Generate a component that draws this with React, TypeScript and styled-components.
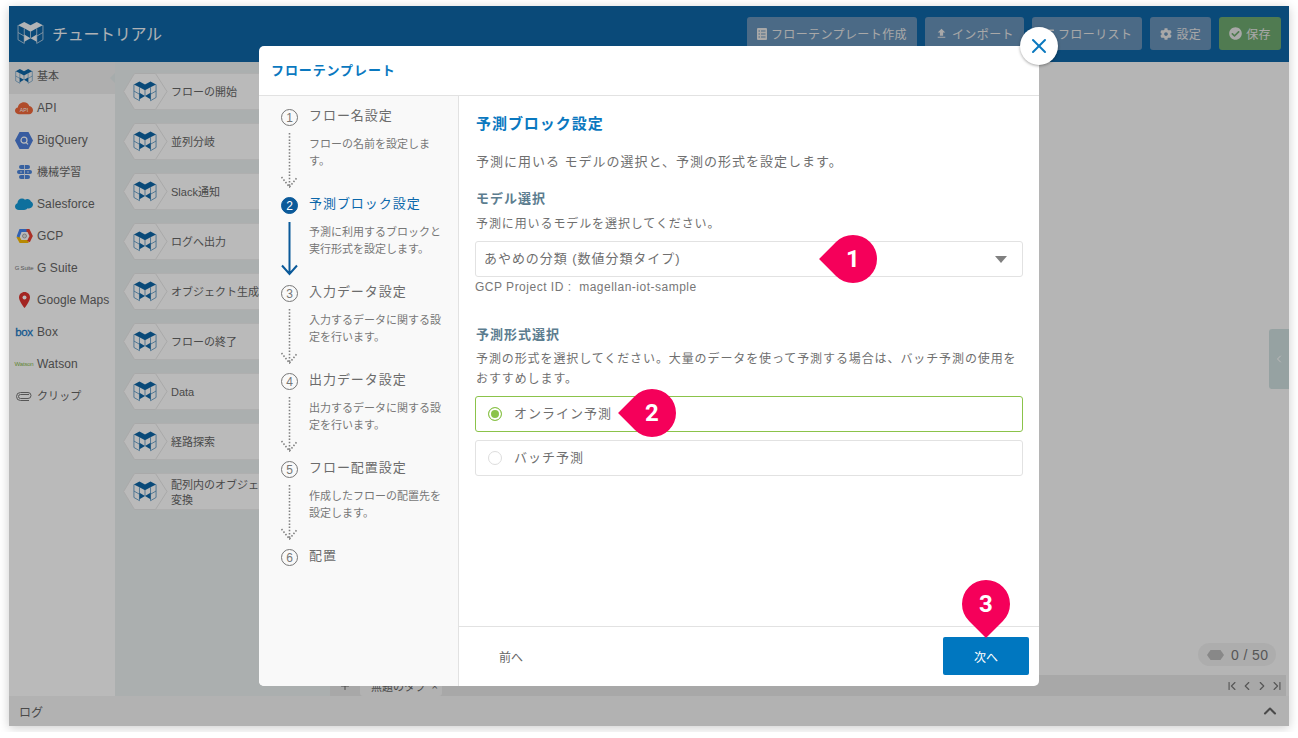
import styled, { createGlobalStyle } from 'styled-components'
import { FaCheckCircle, FaCog, FaList } from 'react-icons/fa'
import { MdFileUpload } from 'react-icons/md'
import { ChevronFirst, ChevronLast, ChevronLeft, ChevronRight, ChevronUp, Plus, X } from 'lucide-react'

const GlobalStyle = createGlobalStyle`
  html, body {
    margin: 0;
    background: #fff;
    font-family: "Liberation Sans", "Noto Sans CJK JP", sans-serif;
    color: #666;
  }
  * { box-sizing: border-box; }
`

const Frame = styled.div`
  position: relative;
  width: 1280px;
  height: 720px;
  margin: 6px 9px;
  display: flex;
  flex-direction: column;
  background: #fff;
  box-shadow: 0 2px 10px rgba(0, 0, 0, 0.2);
`

const Header = styled.header`
  height: 56px;
  flex: none;
  display: flex;
  align-items: flex-start;
  padding: 11px 8px 0 8px;
  background: #0f66a6;
  color: #fff;
`

const Brand = styled.div`
  display: flex;
  align-items: center;
  gap: 8px;
  height: 31px;
  margin-right: auto;
  font-size: 16px;
  letter-spacing: -0.3px;
  color: #f0f4f8;
`

const HeaderButtons = styled.div`
  display: flex;
  gap: 8px;
`

const HeaderButton = styled.button<{ $green?: boolean }>`
  height: 33px;
  display: flex;
  align-items: center;
  gap: 4px;
  padding: 0 10px;
  border: 0;
  border-radius: 3px;
  font: inherit;
  font-size: 12px;
  letter-spacing: 0.4px;
  color: #e6e6e6;
  background: ${(p) => (p.$green ? '#6ea96f' : '#6892b8')};
`

const Body = styled.div`
  flex: 1;
  display: flex;
  min-height: 0;
`

const Sidebar = styled.nav`
  width: 106px;
  flex: none;
  background: #fff;
`

const SideItem = styled.div<{ $active?: boolean }>`
  position: relative;
  height: 32px;
  display: flex;
  align-items: center;
  padding: 0 0 4px 6px;
  gap: 4px;
  font-size: 12px;
  letter-spacing: 0.1px;
  background: ${(p) => (p.$active ? '#f0f0f0' : 'transparent')};

  ${(p) =>
    p.$active &&
    `&::after {
      content: '';
      position: absolute;
      right: 0;
      top: 11px;
      border: 5px solid transparent;
      border-right-color: #e4ecec;
      border-left-width: 0;
    }`}
`

const SideLabel = styled.span<{ $jp: boolean }>`
  font-size: ${(p) => (p.$jp ? 11 : 12)}px;
  padding-bottom: ${(p) => (p.$jp ? 2 : 0)}px;
`

const SideIconBox = styled.span`
  width: 18px;
  height: 18px;
  flex: none;
  display: flex;
  align-items: center;
  justify-content: center;
`

const TinyLogo = styled.span<{ $color: string }>`
  font-size: 6px;
  letter-spacing: -0.2px;
  white-space: nowrap;
  color: ${(p) => p.$color};
`

const BoxLogo = styled.span`
  font-size: 11.5px;
  line-height: 16px;
  letter-spacing: -0.3px;
  -webkit-text-stroke: 0.3px #1a78c4;
  color: #1a78c4;
`

const Blocks = styled.div`
  width: 215px;
  flex: none;
  display: flex;
  flex-direction: column;
  gap: 13px;
  padding: 11px 10px 0 8px;
  background: #ebf0f0;
`

const BlockItem = styled.div`
  display: flex;
  height: 37px;
  isolation: isolate;
`

const BlockHex = styled.svg`
  width: 45px;
  height: 37px;
  flex: none;
  position: relative;
  z-index: 1;
`

const BlockBody = styled.div`
  flex: 1;
  margin-left: -12px;
  padding: 2px 34px 0 15px;
  display: flex;
  align-items: center;
  font-size: 11px;
  line-height: 15px;
  background: #fff;
  border: 1px solid #f0f0f0;
  border-left: 0;
`

const Workspace = styled.main`
  flex: 1;
  display: flex;
  flex-direction: column;
  background: #f8f8f8;
`

const Canvas = styled.div`
  position: relative;
  flex: 1;
`

const Counter = styled.div`
  position: absolute;
  right: 13px;
  bottom: 9px;
  height: 23px;
  width: 78px;
  display: flex;
  align-items: center;
  gap: 7px;
  padding-left: 9px;
  border-radius: 12px;
  font-size: 14px;
  letter-spacing: 0.4px;
  background: #eeeeee;
  color: #777;
`

const Handle = styled.div`
  position: absolute;
  right: 0;
  top: 267px;
  width: 20px;
  height: 60px;
  display: flex;
  align-items: center;
  justify-content: center;
  border-radius: 3px 0 0 3px;
  background: #cedfdf;
  color: #fff;
`

const TabBar = styled.div`
  height: 21px;
  margin-right: 3px;
  display: flex;
  align-items: center;
  padding-left: 9px;
  background: #e6e6e6;
`

const Tab = styled.div`
  height: 21px;
  width: 82px;
  margin-left: 9px;
  display: flex;
  align-items: center;
  justify-content: space-between;
  padding: 0 4px 0 11px;
  font-size: 11px;
  background: #f4f4f4;
  border-radius: 0 0 3px 3px;
`

const Pager = styled.div`
  margin-left: auto;
  padding-right: 2px;
  display: flex;
  gap: 1px;
  color: #777;
`

const LogBar = styled.footer`
  height: 30px;
  flex: none;
  display: flex;
  align-items: center;
  justify-content: space-between;
  padding: 0 9px 0 10px;
  font-size: 12px;
  background: #f5f5f5;
`

const Overlay = styled.div`
  position: absolute;
  inset: 0;
  display: flex;
  align-items: center;
  justify-content: center;
  background: rgba(0, 0, 0, 0.27);
`

const Modal = styled.section`
  position: relative;
  width: 780px;
  height: 640px;
  display: flex;
  flex-direction: column;
  border-radius: 5px;
  background: #fff;
`

const CloseButton = styled.button`
  position: absolute;
  top: -19px;
  right: -19px;
  width: 38px;
  height: 38px;
  display: flex;
  align-items: center;
  justify-content: center;
  padding: 0;
  border: 0;
  border-radius: 50%;
  background: #fff;
  color: #0a78bf;
  box-shadow: 0 1px 3px rgba(0, 0, 0, 0.35);
`

const ModalHeader = styled.div`
  height: 50px;
  flex: none;
  display: flex;
  align-items: center;
  padding: 0 12px 2px;
  font-size: 13px;
  font-weight: 700;
  letter-spacing: 0.9px;
  color: #0a78bf;
  border-bottom: 1px solid #e2e2e2;
`

const ModalBody = styled.div`
  flex: 1;
  min-height: 0;
  display: flex;
`

const Stepper = styled.div`
  width: 200px;
  flex: none;
  padding: 13px 0 0 22px;
  background: #f9f9f9;
  border-right: 1px solid #e2e2e2;
  border-radius: 0 0 0 5px;
`

const Step = styled.div`
  height: 88px;
  display: flex;
  gap: 11px;
`

const StepRail = styled.div`
  width: 17px;
  flex: none;
  display: flex;
  flex-direction: column;
  align-items: center;
`

const StepNumber = styled.span<{ $active?: boolean }>`
  width: 17px;
  height: 17px;
  flex: none;
  display: flex;
  align-items: center;
  justify-content: center;
  border-radius: 50%;
  font-size: 12px;
  border: 1px solid ${(p) => (p.$active ? '#0b5a9a' : '#777')};
  color: ${(p) => (p.$active ? '#fff' : '#777')};
  background: ${(p) => (p.$active ? '#0b5a9a' : 'transparent')};
`

const StepLine = styled.svg`
  width: 17px;
  height: 55px;
  margin-top: 7px;
  flex: none;
`

const StepText = styled.div`
  width: 136px;
  margin-top: -1px;
`

const StepTitle = styled.div<{ $active?: boolean }>`
  font-size: 13px;
  line-height: 15px;
  letter-spacing: 0.95px;
  white-space: nowrap;
  color: ${(p) => (p.$active ? '#0b68ab' : '#6c6c6c')};
`

const StepDesc = styled.div`
  margin-top: 13px;
  font-size: 11px;
  line-height: 17px;
  color: #777;
`

const Pane = styled.div`
  flex: 1;
  min-width: 0;
  display: flex;
  flex-direction: column;
`

const PaneMain = styled.div`
  flex: 1;
  padding: 18px 16px 0 17px;
`

const PaneTitle = styled.h2`
  margin: 0;
  font-size: 15px;
  line-height: 20px;
  letter-spacing: 0.95px;
  color: #0a78bf;
`

const Lead = styled.p`
  margin: 18px 0 0;
  font-size: 13px;
  line-height: 20px;
  letter-spacing: 1px;
  color: #6f6f6f;
`

const FieldTitle = styled.h3<{ $gap: number }>`
  margin: ${(p) => p.$gap}px 0 0;
  font-size: 13px;
  line-height: 18px;
  letter-spacing: 1px;
  color: #5c7d8f;
`

const Help = styled.p<{ $gap: number }>`
  margin: ${(p) => p.$gap}px 0 0;
  font-size: 12px;
  line-height: 20px;
  letter-spacing: 0.9px;
  color: #6f6f6f;
`

const SelectBox = styled.div`
  position: relative;
  height: 36px;
  margin: 7px 0 0 -1px;
  display: flex;
  align-items: center;
  padding: 0 15px 3px 8px;
  border: 1px solid #e2e2e2;
  border-radius: 3px;
  font-size: 13px;
  letter-spacing: 0.95px;
  color: #6f6f6f;
`

const Caret = styled.span`
  margin: 3px 0 0 auto;
  border: 6px solid transparent;
  border-top: 7px solid #808080;
  border-bottom: 0;
`

const Note = styled.div`
  margin: 2px 0 0 -1px;
  font-size: 12px;
  line-height: 17px;
  letter-spacing: 0.5px;
  white-space: pre;
  color: #777;
`

const RadioRow = styled.div<{ $checked?: boolean }>`
  position: relative;
  height: 36px;
  margin: 7px 0 0 -1px;
  display: flex;
  align-items: center;
  gap: 12px;
  padding: 0 0 4px 12px;
  border: 1px solid ${(p) => (p.$checked ? '#8bc34a' : '#e2e2e2')};
  border-radius: 3px;
  font-size: 13px;
  letter-spacing: 1px;
  color: #6f6f6f;

  & + & {
    margin-top: 8px;
  }
`

const RadioDot = styled.span<{ $checked?: boolean }>`
  width: 14px;
  height: 14px;
  flex: none;
  margin-top: 4px;
  border-radius: 50%;
  border: 1px solid ${(p) => (p.$checked ? '#8bc34a' : '#ddd')};
  background: ${(p) => (p.$checked ? '#8bc34a' : '#fff')};
  box-shadow: ${(p) => (p.$checked ? 'inset 0 0 0 2px #fff' : 'none')};
`

const PaneFooter = styled.div`
  height: 60px;
  flex: none;
  display: flex;
  align-items: flex-start;
  justify-content: space-between;
  padding: 10px 10px 0 40px;
  border-top: 1px solid #e2e2e2;
`

const PrevButton = styled.button`
  height: 38px;
  padding: 0;
  border: 0;
  font: inherit;
  font-size: 12px;
  color: #666;
  background: none;
`

const NextButton = styled.button`
  position: relative;
  width: 86px;
  height: 38px;
  padding: 0;
  border: 0;
  border-radius: 2px;
  font: inherit;
  font-size: 12px;
  color: #fff;
  background: #0077c0;
`

const Pin = styled.span<{ $tip: 'left' | 'bottom'; $left: number; $top: number }>`
  position: absolute;
  left: ${(p) => p.$left}px;
  top: ${(p) => p.$top}px;
  width: 48px;
  height: 48px;
  display: flex;
  align-items: center;
  justify-content: center;
  font-family: Roboto, sans-serif;
  font-size: 24px;
  font-weight: 700;
  letter-spacing: 0;
  color: #fff;

  &::before {
    content: '';
    position: absolute;
    inset: 0;
    border-radius: 50% 50% 50% 0;
    background: #f5005a;
    transform: rotate(${(p) => (p.$tip === 'left' ? 45 : -45)}deg);
  }
`

const PinNumber = styled.span`
  position: relative;
`

const LogoMark = ({ size, dark, line }: { size: number; dark: string; line: string }) => (
  <svg width={size} height={size} viewBox="0 0 26 24" fill="none" stroke={line} strokeWidth="0.8">
    <path d="M1 5v14l6 3.5V8M25 5v14l-6 3.5V8M1 12l6 3.5M25 12l-6 3.5M13 11v6.5" />
    <path fill={dark} stroke="none" d="M1 5l6-3.2L13 5 7 8zM13 5l6-3.2L25 5l-6 3zM7 8l6-3 6 3-6 3.2zM7 14l6 3.5L7 21zM19 14l-6 3.5 6 3.5z" />
  </svg>
)

const TemplateIcon = () => (
  <svg width="10" height="12" viewBox="0 0 10 12">
    <rect width="10" height="12" rx="1" fill="currentColor" />
    <path d="M1.500 3h1.500M4 3h4.500M1.500 6h1.500M4 6h4.500M1.500 9h1.500M4 9h4.500" stroke="#6892b8" strokeWidth="1.200" />
  </svg>
)

const sideItems: { label: string; icon: React.ReactNode; active?: boolean; jp?: boolean }[] = [
  { label: '基本', jp: true, active: true, icon: <LogoMark size={18} dark="#0f66a6" line="#3f85b8" /> },
  {
    label: 'API',
    icon: (
      <svg width="19" height="14" viewBox="0 0 19 14">
        <path fill="#f2693b" d="M4 13.500C1.600 13.500 0 12 0 10s1.300-3.300 3-3.500C3.300 3.500 6 1 9.500 1c2.700 0 4.800 1.500 5.600 3.900 2.200.3 3.900 2.200 3.900 4.400 0 2.400-1.900 4.200-4.200 4.200z" />
        <text x="9.5" y="11" fontSize="5.5" textAnchor="middle" fill="#fff">API</text>
      </svg>
    ),
  },
  {
    label: 'BigQuery',
    icon: (
      <svg width="18" height="17" viewBox="0 0 18 17">
        <path fill="#4d7fdc" d="M4.500 0h9L18 8.500 13.500 17h-9L0 8.500z" />
        <circle cx="9" cy="8.2" r="3" fill="none" stroke="#fff" strokeWidth="1.2" />
        <path d="M11 10.400l2 2" stroke="#fff" strokeWidth="1.2" />
      </svg>
    ),
  },
  {
    label: '機械学習',
    jp: true,
    icon: (
      <svg width="17" height="16" viewBox="0 0 17 16" fill="#4d86dc">
        <rect x="3" y="1" width="11" height="4" rx="2" />
        <rect x="1" y="6" width="15" height="4" rx="2" />
        <rect x="3" y="11" width="11" height="4" rx="2" />
        <path d="M8.500 1v14M4 8h2M11 8h2" stroke="#dbe6f7" strokeWidth="0.9" />
      </svg>
    ),
  },
  {
    label: 'Salesforce',
    icon: (
      <svg width="18" height="12" viewBox="0 0 18 12">
        <path fill="#149ad8" d="M4 12C1.700 12 0 10.600 0 8.600 0 7 1 5.700 2.400 5.200 2.600 2.600 4.500.6 7 .6c1.200 0 2.200.4 3 1.100.7-.5 1.500-.8 2.400-.8 1.700 0 3 1 3.500 2.500C17.200 4 18 5.200 18 6.600c0 2.200-1.800 3.900-4 3.900-.5 0-1-.1-1.400-.2-.9 1-2.100 1.700-3.500 1.700z" />
      </svg>
    ),
  },
  {
    label: 'GCP',
    icon: (
      <svg width="17" height="16" viewBox="0 0 17 16" fill="none" strokeWidth="3">
        <path stroke="#fbbc05" d="M12.500 13.500H4.500L1.800 8.500" />
        <path stroke="#4285f4" d="M2 9l2.500-6.500H11" />
        <path stroke="#ea4335" d="M10.500 2.500h2L15.200 8l-2.700 5.500" />
        <circle cx="8.500" cy="8" r="2" fill="#e8e8e8" stroke="#999" strokeWidth="0.8" />
      </svg>
    ),
  },
  { label: 'G Suite', icon: <TinyLogo $color="#777">G Suite</TinyLogo> },
  {
    label: 'Google Maps',
    icon: (
      <svg width="11" height="16" viewBox="0 0 11 16">
        <path fill="#e0342f" d="M5.500 0C2.500 0 0 2.400 0 5.400 0 9.400 5.500 16 5.500 16S11 9.400 11 5.400C11 2.400 8.500 0 5.500 0z" />
        <circle cx="5.500" cy="5.400" r="2" fill="#fff" />
      </svg>
    ),
  },
  { label: 'Box', icon: <BoxLogo>box</BoxLogo> },
  { label: 'Watson', icon: <TinyLogo $color="#86b84a">Watson</TinyLogo> },
  {
    label: 'クリップ',
    jp: true,
    icon: (
      <svg width="16" height="9" viewBox="0 0 16 9" fill="none" stroke="#777" strokeWidth="1">
        <path d="M13 2.500H4.500a2 2 0 0 0 0 4H12a3 3 0 0 0 0-6H4.500a4 4 0 0 0 0 8H13" />
      </svg>
    ),
  },
]

const blockItems = ['フローの開始', '並列分岐', 'Slack通知', 'ログへ出力', 'オブジェクト生成', 'フローの終了', 'Data', '経路探索', '配列内のオブジェクト変換']

const steps = [
  { title: 'フロー名設定', desc: 'フローの名前を設定します。' },
  { title: '予測ブロック設定', desc: '予測に利用するブロックと実行形式を設定します。', active: true },
  { title: '入力データ設定', desc: '入力するデータに関する設定を行います。' },
  { title: '出力データ設定', desc: '出力するデータに関する設定を行います。' },
  { title: 'フロー配置設定', desc: '作成したフローの配置先を設定します。' },
  { title: '配置', desc: '' },
]

const DottedLine = () => (
  <StepLine viewBox="0 0 17 55" fill="none" stroke="#808080" strokeWidth="1.6" strokeDasharray="1.5 1.7">
    <path d="M8.500 0v54M.5 44l8 10 8-10" />
  </StepLine>
)

const SolidLine = () => (
  <StepLine viewBox="0 0 17 55" fill="none" stroke="#0b5a9a" strokeWidth="2">
    <path d="M8.500 1v52M1 44.500l7.500 8.500L16 44.500" />
  </StepLine>
)

export default function App() {
  return (
    <>
      <GlobalStyle />
      <Frame>
        <Header>
          <Brand>
            <LogoMark size={27} dark="#f4f7fa" line="#c4d8e8" />
            チュートリアル
          </Brand>
          <HeaderButtons>
            <HeaderButton><TemplateIcon />フローテンプレート作成</HeaderButton>
            <HeaderButton><MdFileUpload size={13} />インポート</HeaderButton>
            <HeaderButton><FaList size={12} />フローリスト</HeaderButton>
            <HeaderButton><FaCog size={12} />設定</HeaderButton>
            <HeaderButton $green><FaCheckCircle size={13} />保存</HeaderButton>
          </HeaderButtons>
        </Header>
        <Body>
          <Sidebar>
            {sideItems.map((item) => (
              <SideItem key={item.label} $active={item.active}>
                <SideIconBox>{item.icon}</SideIconBox>
                <SideLabel $jp={!!item.jp}>{item.label}</SideLabel>
              </SideItem>
            ))}
          </Sidebar>
          <Blocks>
            {blockItems.map((label) => (
              <BlockItem key={label}>
                <BlockHex viewBox="0 0 45 37">
                  <path d="M.6 18.500L11.500.5h21L44 18.500 32.500 36.500h-21z" fill="#fff" stroke="#e8e8e8" />
                  <svg x="10" y="6" width="24" height="24" viewBox="0 0 26 24" fill="none" stroke="#3f85b8" strokeWidth="0.8">
                    <path d="M1 5v14l6 3.500V8M25 5v14l-6 3.500V8M1 12l6 3.500M25 12l-6 3.500M13 11v6.500" />
                    <path fill="#0f66a6" stroke="none" d="M1 5l6-3.200L13 5 7 8zM13 5l6-3.200L25 5l-6 3zM7 8l6-3 6 3-6 3.200zM7 14l6 3.500L7 21zM19 14l-6 3.500 6 3.500z" />
                  </svg>
                </BlockHex>
                <BlockBody>{label}</BlockBody>
              </BlockItem>
            ))}
          </Blocks>
          <Workspace>
            <Canvas>
              <Handle><ChevronLeft size={12} /></Handle>
              <Counter>
                <svg width="17" height="10" viewBox="0 0 17 10"><path fill="#bbb" d="M3.500 0h10L17 5l-3.500 5h-10L0 5z" /></svg>
                0 / 50
              </Counter>
            </Canvas>
            <TabBar>
              <Plus size={12} />
              <Tab>無題のタブ<span>×</span></Tab>
              <Pager>
                <ChevronFirst size={14} />
                <ChevronLeft size={14} />
                <ChevronRight size={14} />
                <ChevronLast size={14} />
              </Pager>
            </TabBar>
          </Workspace>
        </Body>
        <LogBar>
          ログ
          <ChevronUp size={20} strokeWidth={2.5} />
        </LogBar>
        <Overlay>
          <Modal>
            <CloseButton><X size={24} strokeWidth={2} /></CloseButton>
            <ModalHeader>フローテンプレート</ModalHeader>
            <ModalBody>
              <Stepper>
                {steps.map((step, i) => (
                  <Step key={step.title}>
                    <StepRail>
                      <StepNumber $active={step.active}>{i + 1}</StepNumber>
                      {i < steps.length - 1 && (step.active ? <SolidLine /> : <DottedLine />)}
                    </StepRail>
                    <StepText>
                      <StepTitle $active={step.active}>{step.title}</StepTitle>
                      <StepDesc>{step.desc}</StepDesc>
                    </StepText>
                  </Step>
                ))}
              </Stepper>
              <Pane>
                <PaneMain>
                  <PaneTitle>予測ブロック設定</PaneTitle>
                  <Lead>予測に用いる モデルの選択と、予測の形式を設定します。</Lead>
                  <FieldTitle $gap={18}>モデル選択</FieldTitle>
                  <Help $gap={6}>予測に用いるモデルを選択してください。</Help>
                  <SelectBox>
                    あやめの分類 (数値分類タイプ)
                    <Caret />
                    <Pin $tip="left" $left={353} $top={-7}><PinNumber>1</PinNumber></Pin>
                  </SelectBox>
                  <Note>GCP Project ID :  magellan-iot-sample</Note>
                  <FieldTitle $gap={30}>予測形式選択</FieldTitle>
                  <Help $gap={5}>予測の形式を選択してください。大量のデータを使って予測する場合は、バッチ予測の使用をおすすめします。</Help>
                  <RadioRow $checked>
                    <RadioDot $checked />
                    オンライン予測
                    <Pin $tip="left" $left={152} $top={-8}><PinNumber>2</PinNumber></Pin>
                  </RadioRow>
                  <RadioRow>
                    <RadioDot />
                    バッチ予測
                  </RadioRow>
                </PaneMain>
                <PaneFooter>
                  <PrevButton>前へ</PrevButton>
                  <NextButton>
                    次へ
                    <Pin $tip="bottom" $left={19} $top={-57}><PinNumber>3</PinNumber></Pin>
                  </NextButton>
                </PaneFooter>
              </Pane>
            </ModalBody>
          </Modal>
        </Overlay>
      </Frame>
    </>
  )
}
